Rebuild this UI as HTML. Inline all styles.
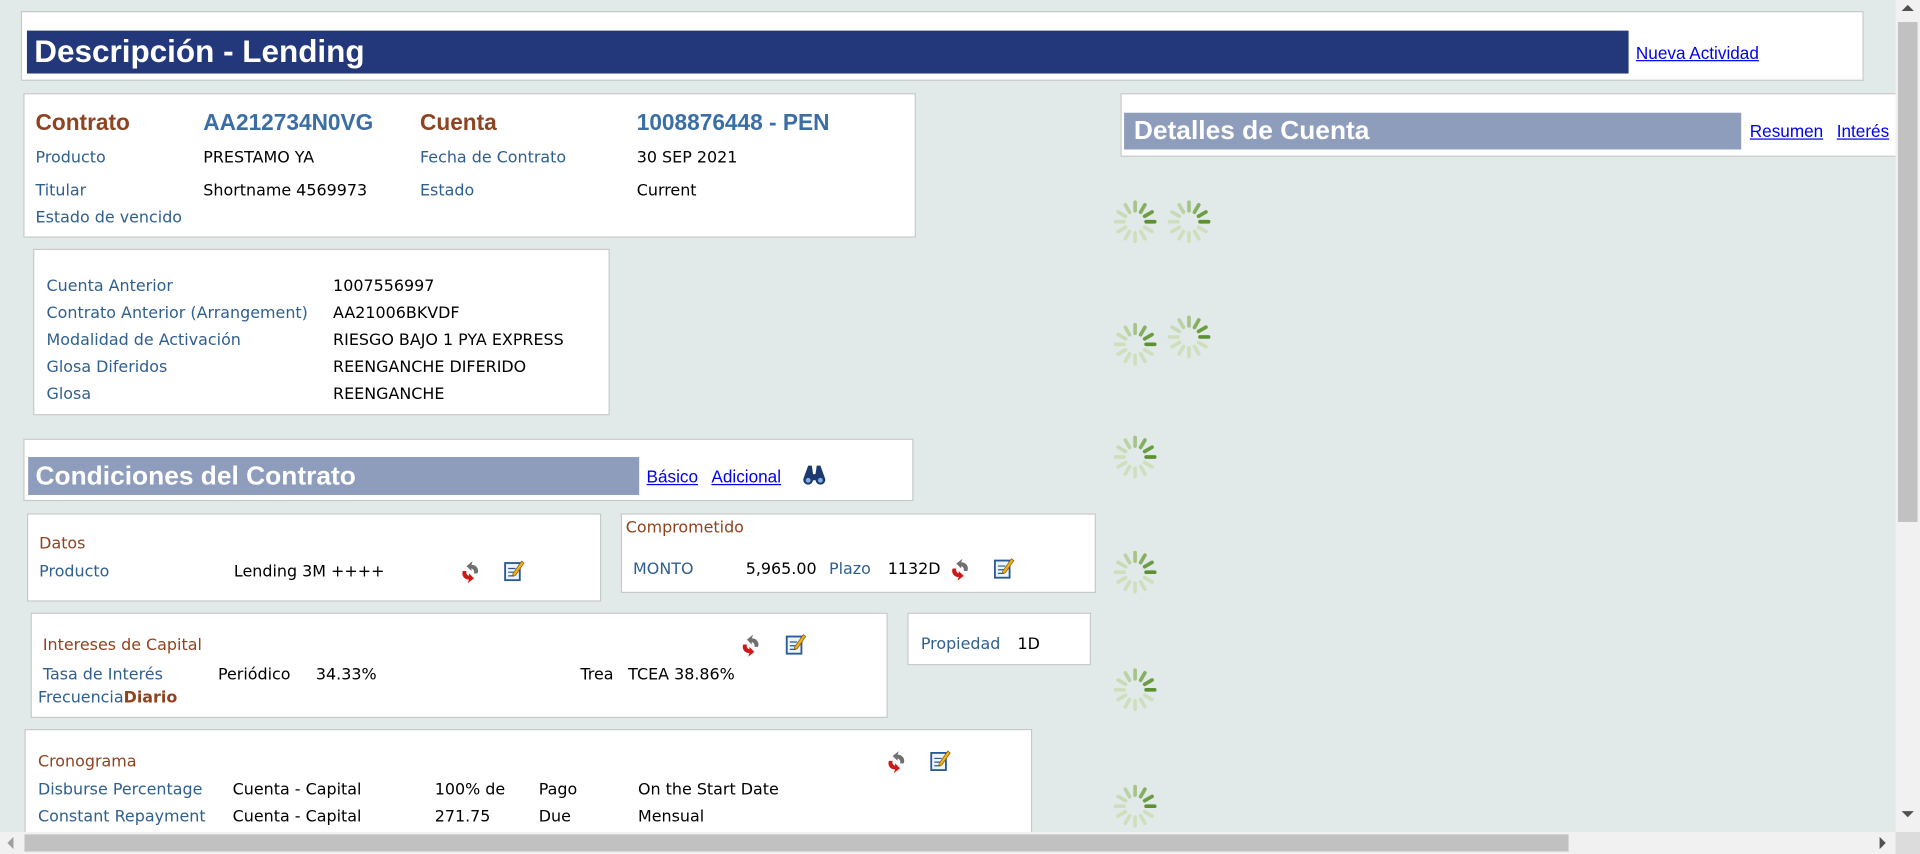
<!DOCTYPE html>
<html><head><meta charset="utf-8">
<style>
html,body{margin:0;padding:0;width:1920px;height:854px;overflow:hidden;background:#e1eae8;}
#w{position:absolute;left:0;top:0;width:1568px;height:697px;transform:scale(1.22449,1.22525);transform-origin:0 0;font-family:"DejaVu Sans","Liberation Sans",sans-serif;font-size:13px;color:#000;}
.a{position:absolute;white-space:nowrap;}
.box{position:absolute;background:#fff;border:1px solid #c8c8c8;box-sizing:border-box;}
.bl{color:#2f5f8f;}
.br{color:#8f4320;}
.lk{color:#0000ee;text-decoration:underline;font-size:14px;font-family:"Liberation Sans",sans-serif;}
.t{transform:translateY(-50%);}
.bar{position:absolute;color:#fff;font-weight:bold;font-family:"Liberation Sans",sans-serif;}
.h{font-family:"Liberation Sans",sans-serif;font-size:18.5px;font-weight:bold;}
</style></head><body>
<div id="w">
<svg width="0" height="0" style="position:absolute">
<defs>
<g id="sp">
<g stroke-width="3" stroke-linecap="round">
<line x1="9" y1="0" x2="16" y2="0" stroke="#5d9130" transform="rotate(0)"/>
<line x1="9" y1="0" x2="16" y2="0" stroke="#6c9c42" transform="rotate(-30)"/>
<line x1="9" y1="0" x2="16" y2="0" stroke="#86ae62" transform="rotate(-60)"/>
<line x1="9" y1="0" x2="16" y2="0" stroke="#a6c488" transform="rotate(-90)"/>
<line x1="9" y1="0" x2="16" y2="0" stroke="#bcd2a6" transform="rotate(-120)"/>
<line x1="9" y1="0" x2="16" y2="0" stroke="#c9dbb6" transform="rotate(-150)"/>
<line x1="9" y1="0" x2="16" y2="0" stroke="#cfdfbe" transform="rotate(180)"/>
<line x1="9" y1="0" x2="16" y2="0" stroke="#cfdfbe" transform="rotate(150)"/>
<line x1="9" y1="0" x2="16" y2="0" stroke="#cfdfbe" transform="rotate(120)"/>
<line x1="9" y1="0" x2="16" y2="0" stroke="#cfdfbe" transform="rotate(90)"/>
<line x1="9" y1="0" x2="16" y2="0" stroke="#cfdfbe" transform="rotate(60)"/>
<line x1="9" y1="0" x2="16" y2="0" stroke="#cfdfbe" transform="rotate(30)"/>
</g></g>
<g id="rf"><path d="M3 8 A5 5 0 0 0 8 15 L7 18 L12 14 L8 10 L8 12 A3 3 0 0 1 6 8 Z" fill="#d01818"/><path d="M15 10 A5 5 0 0 0 10 3 L11 0 L6 4 L10 8 L10 6 A3 3 0 0 1 12 10 Z" fill="#707070"/></g>
<g id="ed"><rect x="1.5" y="3.5" width="12" height="14" fill="#eef4fb" stroke="#2a5a95" stroke-width="1.5"/><line x1="4" y1="8" x2="10" y2="8" stroke="#2a5a95"/><line x1="4" y1="11" x2="10" y2="11" stroke="#2a5a95"/><line x1="4" y1="14" x2="9" y2="14" stroke="#2a5a95"/><path d="M8 12 L15 2 L17 3.5 L10 13.5 L7.5 14 Z" fill="#f0b020" stroke="#8a5a00" stroke-width=".6"/></g>
</defs></svg>

<div class="box" style="left:17px;top:9px;width:1505px;height:57px;"></div>
<div style="position:absolute;left:22px;top:25px;width:1308px;height:35px;background:#22387a;"></div>
<div class="bar a t" style="left:28px;top:43px;font-size:25.7px;">Descripción - Lending</div>
<div class="a lk t" style="left:1336px;top:43px;">Nueva Actividad</div>

<div class="box" style="left:19px;top:76px;width:729px;height:118px;"></div>
<div class="a t br h" style="left:29px;top:100px;">Contrato</div>
<div class="a t h" style="left:166px;top:100px;color:#3a6ea5">AA212734N0VG</div>
<div class="a t br h" style="left:343px;top:100px;">Cuenta</div>
<div class="a t h" style="left:520px;top:100px;color:#3a6ea5">1008876448 - PEN</div>
<div class="a t bl" style="left:29px;top:129px;">Producto</div>
<div class="a t" style="left:166px;top:129px;">PRESTAMO YA</div>
<div class="a t bl" style="left:343px;top:129px;">Fecha de Contrato</div>
<div class="a t" style="left:520px;top:129px;">30 SEP 2021</div>
<div class="a t bl" style="left:29px;top:156px;">Titular</div>
<div class="a t" style="left:166px;top:156px;">Shortname 4569973</div>
<div class="a t bl" style="left:343px;top:156px;">Estado</div>
<div class="a t" style="left:520px;top:156px;">Current</div>
<div class="a t bl" style="left:29px;top:178px;">Estado de vencido</div>

<div class="box" style="left:27px;top:203px;width:471px;height:136px;"></div>
<div class="a t bl" style="left:38px;top:234px;">Cuenta Anterior</div><div class="a t" style="left:272px;top:234px;">1007556997</div>
<div class="a t bl" style="left:38px;top:256px;">Contrato Anterior (Arrangement)</div><div class="a t" style="left:272px;top:256px;">AA21006BKVDF</div>
<div class="a t bl" style="left:38px;top:278px;">Modalidad de Activación</div><div class="a t" style="left:272px;top:278px;">RIESGO BAJO 1 PYA EXPRESS</div>
<div class="a t bl" style="left:38px;top:300px;">Glosa Diferidos</div><div class="a t" style="left:272px;top:300px;">REENGANCHE DIFERIDO</div>
<div class="a t bl" style="left:38px;top:322px;">Glosa</div><div class="a t" style="left:272px;top:322px;">REENGANCHE</div>

<div class="box" style="left:19px;top:358px;width:727px;height:51px;"></div>
<div style="position:absolute;left:23px;top:373px;width:499px;height:31px;background:#8f9dbd;"></div>
<div class="bar a t" style="left:29px;top:389px;font-size:21.5px;">Condiciones del Contrato</div>
<div class="a lk t" style="left:528px;top:389px;">Básico</div>
<div class="a lk t" style="left:581px;top:389px;">Adicional</div>
<svg class="a" style="left:655px;top:379px" width="20" height="18"><path d="M5 1 L8 1 L9 8 L11 8 L12 1 L15 1 L19 12 A4 4 0 1 1 11 13 L9 13 A4 4 0 1 1 1 12 Z" fill="#1c3a70"/><circle cx="5" cy="13" r="2" fill="#7fb0e0"/><circle cx="15" cy="13" r="2" fill="#7fb0e0"/></svg>

<div class="box" style="left:22px;top:419px;width:469px;height:72px;"></div>
<div class="a t br" style="left:32px;top:444px;">Datos</div>
<div class="a t bl" style="left:32px;top:467px;">Producto</div>
<div class="a t" style="left:191px;top:467px;">Lending 3M ++++</div>
<svg class="a" style="left:375px;top:458px" width="20" height="20"><use href="#rf"/></svg>
<svg class="a" style="left:411px;top:456px" width="20" height="20"><use href="#ed"/></svg>

<div class="box" style="left:507px;top:419px;width:388px;height:65px;"></div>
<div class="a t br" style="left:511px;top:431px;">Comprometido</div>
<div class="a t bl" style="left:517px;top:465px;">MONTO</div>
<div class="a t" style="left:609px;top:465px;">5,965.00</div>
<div class="a t bl" style="left:677px;top:465px;">Plazo</div>
<div class="a t" style="left:725px;top:465px;">1132D</div>
<svg class="a" style="left:775px;top:456px" width="20" height="20"><use href="#rf"/></svg>
<svg class="a" style="left:811px;top:454px" width="20" height="20"><use href="#ed"/></svg>

<div class="box" style="left:25px;top:500px;width:700px;height:86px;"></div>
<div class="a t br" style="left:35px;top:527px;">Intereses de Capital</div>
<div class="a t bl" style="left:35px;top:551px;">Tasa de Interés</div>
<div class="a t" style="left:178px;top:551px;">Periódico</div>
<div class="a t" style="left:258px;top:551px;">34.33%</div>
<div class="a t" style="left:474px;top:551px;">Trea</div>
<div class="a t" style="left:513px;top:551px;">TCEA 38.86%</div>
<div class="a t" style="left:31px;top:570px;"><span class="bl">Frecuencia</span><span class="br" style="font-weight:bold">Diario</span></div>
<svg class="a" style="left:604px;top:518px" width="20" height="20"><use href="#rf"/></svg>
<svg class="a" style="left:641px;top:516px" width="20" height="20"><use href="#ed"/></svg>

<div class="box" style="left:741px;top:500px;width:150px;height:43px;"></div>
<div class="a t bl" style="left:752px;top:526px;">Propiedad</div>
<div class="a t" style="left:831px;top:526px;">1D</div>

<div class="box" style="left:20px;top:595px;width:823px;height:100px;"></div>
<div class="a t br" style="left:31px;top:622px;">Cronograma</div>
<div class="a t bl" style="left:31px;top:645px;">Disburse Percentage</div>
<div class="a t" style="left:190px;top:645px;">Cuenta - Capital</div>
<div class="a t" style="left:355px;top:645px;">100% de</div>
<div class="a t" style="left:440px;top:645px;">Pago</div>
<div class="a t" style="left:521px;top:645px;">On the Start Date</div>
<div class="a t bl" style="left:31px;top:667px;">Constant Repayment</div>
<div class="a t" style="left:190px;top:667px;">Cuenta - Capital</div>
<div class="a t" style="left:355px;top:667px;">271.75</div>
<div class="a t" style="left:440px;top:667px;">Due</div>
<div class="a t" style="left:521px;top:667px;">Mensual</div>
<svg class="a" style="left:723px;top:613px" width="20" height="20"><use href="#rf"/></svg>
<svg class="a" style="left:759px;top:611px" width="20" height="20"><use href="#ed"/></svg>

<div class="box" style="left:915px;top:76px;width:640px;height:52px;"></div>
<div style="position:absolute;left:918px;top:92px;width:504px;height:30px;background:#8f9dbd;"></div>
<div class="bar a t" style="left:926px;top:107px;font-size:21.5px;">Detalles de Cuenta</div>
<div class="a lk t" style="left:1429px;top:107px;">Resumen</div>
<div class="a lk t" style="left:1500px;top:107px;">Interés</div>

<svg class="a" style="left:905px;top:159px" width="44" height="44"><g transform="translate(22,22)"><use href="#sp"/></g></svg>
<svg class="a" style="left:949px;top:159px" width="44" height="44"><g transform="translate(22,22)"><use href="#sp"/></g></svg>
<svg class="a" style="left:905px;top:259px" width="44" height="44"><g transform="translate(22,22)"><use href="#sp"/></g></svg>
<svg class="a" style="left:949px;top:253px" width="44" height="44"><g transform="translate(22,22)"><use href="#sp"/></g></svg>
<svg class="a" style="left:905px;top:351px" width="44" height="44"><g transform="translate(22,22)"><use href="#sp"/></g></svg>
<svg class="a" style="left:905px;top:445px" width="44" height="44"><g transform="translate(22,22)"><use href="#sp"/></g></svg>
<svg class="a" style="left:905px;top:541px" width="44" height="44"><g transform="translate(22,22)"><use href="#sp"/></g></svg>
<svg class="a" style="left:905px;top:636px" width="44" height="44"><g transform="translate(22,22)"><use href="#sp"/></g></svg>

<div style="position:absolute;left:1548px;top:0;width:20px;height:697px;background:#f1f1f1;"></div>
<div style="position:absolute;left:1550px;top:18px;width:16px;height:408px;background:#c1c1c1;"></div>
<div style="position:absolute;left:1553px;top:4px;width:0;height:0;border-left:5px solid transparent;border-right:5px solid transparent;border-bottom:5px solid #505050;"></div>
<div style="position:absolute;left:1553px;top:662px;width:0;height:0;border-left:5px solid transparent;border-right:5px solid transparent;border-top:5px solid #505050;"></div>
<div style="position:absolute;left:0;top:679px;width:1548px;height:18px;background:#f1f1f1;"></div>
<div style="position:absolute;left:20px;top:681px;width:1261px;height:14px;background:#c1c1c1;"></div>
<div style="position:absolute;left:6px;top:683px;width:0;height:0;border-top:5px solid transparent;border-bottom:5px solid transparent;border-right:5px solid #a0a0a0;"></div>
<div style="position:absolute;left:1535px;top:683px;width:0;height:0;border-top:5px solid transparent;border-bottom:5px solid transparent;border-left:5px solid #505050;"></div>
<div style="position:absolute;left:1548px;top:679px;width:20px;height:18px;background:#dcdcdc;"></div>
</div>
</body></html>
